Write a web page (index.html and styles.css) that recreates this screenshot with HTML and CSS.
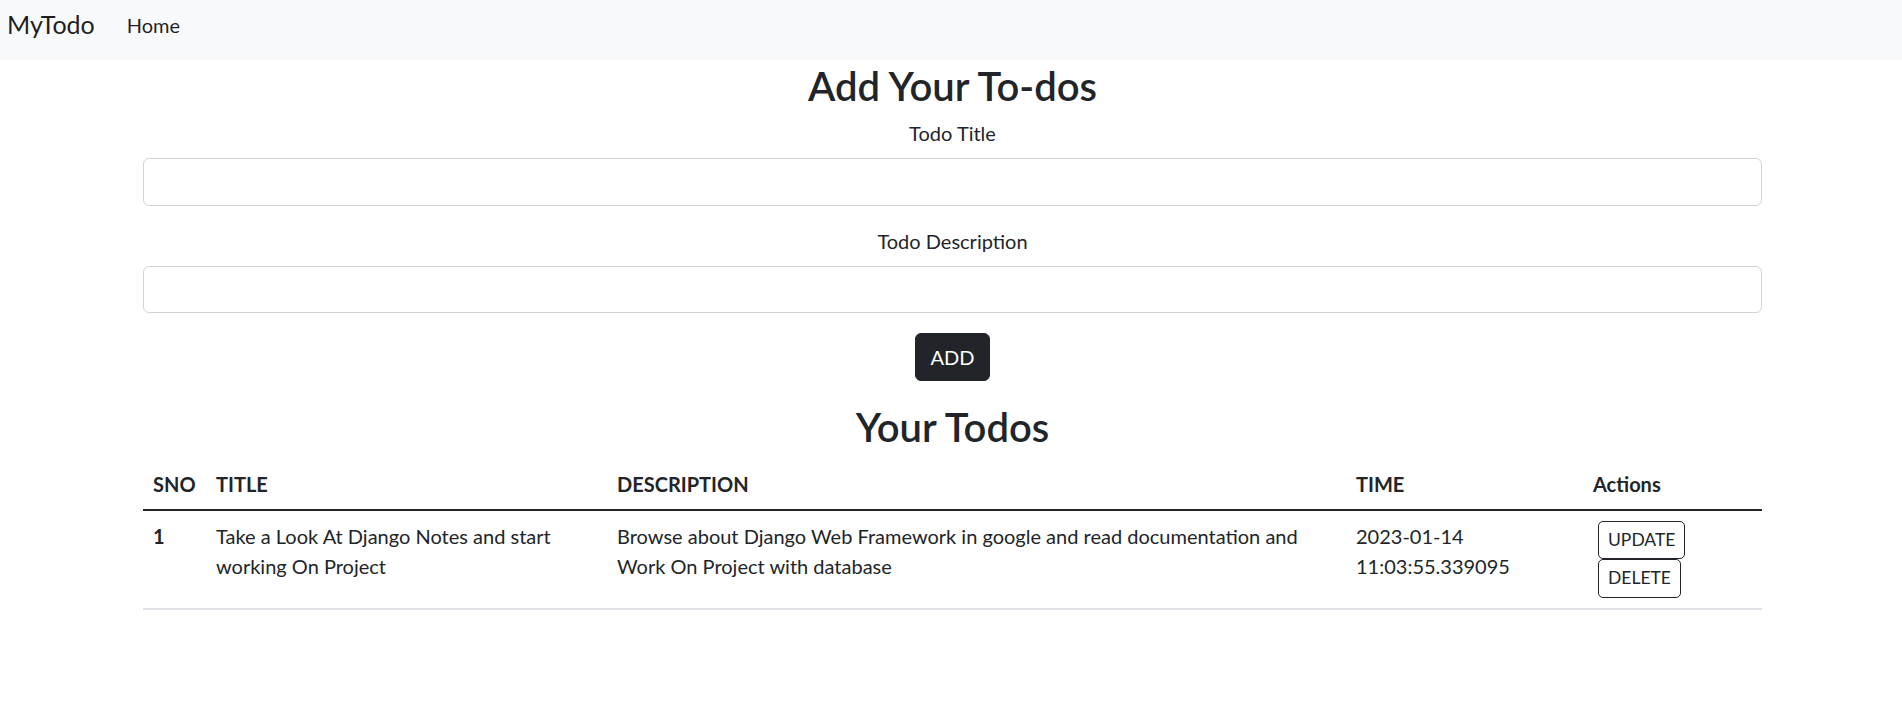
FILE: index.html
```html
<!DOCTYPE html>
<html lang="en">
<head>
<meta charset="utf-8">
<title>MyTodo</title>
<link rel="stylesheet" href="styles.css">
</head>
<body>
<nav class="navbar">
  <a class="brand" href="#">MyTodo</a>
  <a class="nav-link" href="#">Home</a>
</nav>
<main class="container">
  <h2 class="heading">Add Your To-dos</h2>
  <form class="todo-form">
    <div class="field">
      <label class="label" for="title">Todo Title</label>
      <input class="input" id="title" type="text">
    </div>
    <div class="field">
      <label class="label" for="desc">Todo Description</label>
      <input class="input" id="desc" type="text">
    </div>
    <div class="submit-row">
      <button class="btn btn-dark" type="button">ADD</button>
    </div>
  </form>
  <h2 class="heading heading-list">Your Todos</h2>
  <table class="table">
    <colgroup>
      <col class="c-sno"><col class="c-title"><col class="c-desc"><col class="c-time"><col class="c-act">
    </colgroup>
    <thead>
      <tr>
        <th>SNO</th>
        <th>TITLE</th>
        <th>DESCRIPTION</th>
        <th>TIME</th>
        <th>Actions</th>
      </tr>
    </thead>
    <tbody>
      <tr>
        <th>1</th>
        <td class="nowrap">Take a Look At Django Notes and start<br>working On Project</td>
        <td class="nowrap">Browse about Django Web Framework in google and read documentation and<br>Work On Project with database</td>
        <td class="nowrap">2023-01-14<br>11:03:55.339095</td>
        <td>
          <div class="row-actions">
            <button class="btn btn-sm btn-outline" type="button">UPDATE</button>
            <button class="btn btn-sm btn-outline" type="button">DELETE</button>
          </div>
        </td>
      </tr>
    </tbody>
  </table>
</main>
</body>
</html>
```
FILE: styles.css
```css
* { box-sizing: border-box; }

html, body {
  margin: 0;
  padding: 0;
  background: #fff;
}

body {
  font-family: Lato, "Open Sans", "Liberation Sans", sans-serif;
  font-size: 20px;
  line-height: 30px;
  color: #212529;
}

.navbar {
  height: 60px;
  background: #f8f9fa;
  display: flex;
  align-items: flex-start;
  padding: 0 7px;
}

.brand {
  font-size: 25px;
  line-height: 37px;
  color: rgba(0, 0, 0, 0.9);
  text-decoration: none;
  margin-right: 22px;
  padding-top: 6px;
}

.nav-link {
  font-size: 20px;
  line-height: 30px;
  color: rgba(0, 0, 0, 0.88);
  text-decoration: none;
  padding: 10px 10px 0;
}

.container {
  width: 1650px;
  max-width: 100%;
  margin: 0 auto;
  padding: 0 14px 0 17px;
}

.heading {
  margin: 0 0 10px;
  font-size: 40px;
  line-height: 48px;
  font-weight: 600;
  text-align: center;
  padding-top: 2px;
  height: 48px;
}

.heading-list {
  margin-top: 20px;
}

.todo-form {
  margin: 0;
}

.field {
  margin-bottom: 20px;
}

.label {
  display: block;
  text-align: center;
  margin-bottom: 10px;
}

.input {
  display: block;
  width: 100%;
  height: 47.5px;
  border: 1px solid #ced4da;
  border-radius: 6px;
  background: #fff;
  font: inherit;
  padding: 7.5px 15px;
  outline: none;
}

.submit-row {
  display: flex;
  justify-content: center;
}

.btn {
  font-family: inherit;
  cursor: pointer;
  border: 1px solid transparent;
}

.btn-dark {
  background: #212529;
  border-color: #212529;
  color: #fff;
  font-size: 20px;
  line-height: 30px;
  padding: 7.5px 15px;
  height: 47.5px;
  border-radius: 6px;
}

.btn-sm {
  font-size: 17.5px;
  line-height: 26px;
  padding: 5px 9px;
  height: 38.5px;
  border-radius: 5px;
}

.btn-outline {
  background: #fff;
  border-color: #212529;
  color: #212529;
}

.table {
  width: 100%;
  table-layout: fixed;
  border-collapse: collapse;
  vertical-align: top;
}

.c-sno { width: 63px; }
.c-title { width: 401px; }
.c-desc { width: 739px; }
.c-time { width: 237px; }
.c-act { width: 179px; }

.table th,
.table td {
  padding: 10px;
  text-align: left;
}

.table thead th {
  font-weight: 700;
  vertical-align: bottom;
  border-bottom: 2px solid #212529;
}

.table tbody th,
.table tbody td {
  vertical-align: top;
  border-bottom: 2px solid #dee2e6;
}

.table tbody th {
  font-weight: 700;
}

.nowrap {
  white-space: nowrap;
}

.row-actions {
  display: flex;
  flex-direction: column;
  align-items: flex-start;
  padding-left: 5px;
}
```
